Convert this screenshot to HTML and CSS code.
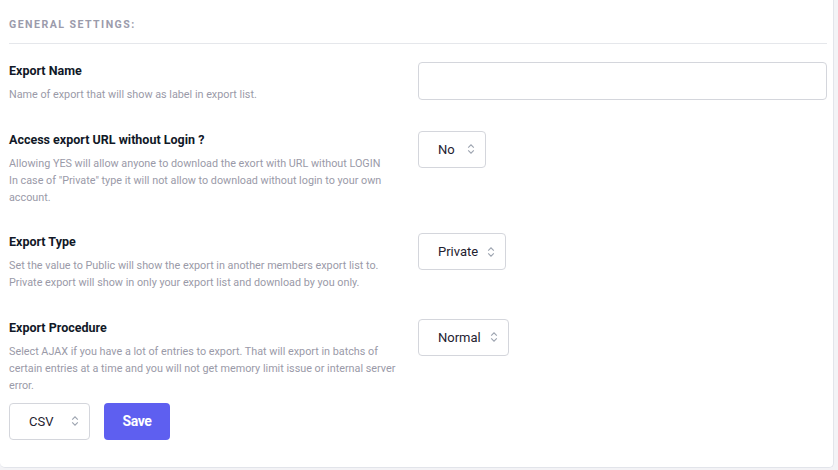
FILE: index.html
```html
<!DOCTYPE html>
<html lang="en">
<head>
<meta charset="utf-8">
<title>General Settings</title>
<link rel="stylesheet" href="styles.css">
</head>
<body>
<div class="card">
  <div class="section-title">General Settings:</div>
  <div class="rows">
    <div class="row">
      <div class="info">
        <div class="label">Export Name</div>
        <div class="desc">Name of export that will show as label in export list.</div>
      </div>
      <div class="control">
        <div class="text-input"></div>
      </div>
    </div>
    <div class="row">
      <div class="info">
        <div class="label">Access export URL without Login ?</div>
        <div class="desc">Allowing YES will allow anyone to download the exort with URL without LOGIN<br>In case of "Private" type it will not allow to download without login to your own account.</div>
      </div>
      <div class="control">
        <div class="select sel-no"><span>No</span><svg class="arrows" width="8" height="12" viewBox="0 0 8 12"><path d="M1.2 4.6 L4 1.8 L6.8 4.6 M1.2 7.4 L4 10.2 L6.8 7.4" fill="none" stroke="#9ca3af" stroke-width="1.1"/></svg></div>
      </div>
    </div>
    <div class="row">
      <div class="info">
        <div class="label">Export Type</div>
        <div class="desc">Set the value to Public will show the export in another members export list to.<br>Private export will show in only your export list and download by you only.</div>
      </div>
      <div class="control">
        <div class="select sel-private"><span>Private</span><svg class="arrows" width="8" height="12" viewBox="0 0 8 12"><path d="M1.2 4.6 L4 1.8 L6.8 4.6 M1.2 7.4 L4 10.2 L6.8 7.4" fill="none" stroke="#9ca3af" stroke-width="1.1"/></svg></div>
      </div>
    </div>
    <div class="row">
      <div class="info">
        <div class="label">Export Procedure</div>
        <div class="desc">Select AJAX if you have a lot of entries to export. That will export in batchs of certain entries at a time and you will not get memory limit issue or internal server error.</div>
      </div>
      <div class="control">
        <div class="select sel-normal"><span>Normal</span><svg class="arrows" width="8" height="12" viewBox="0 0 8 12"><path d="M1.2 4.6 L4 1.8 L6.8 4.6 M1.2 7.4 L4 10.2 L6.8 7.4" fill="none" stroke="#9ca3af" stroke-width="1.1"/></svg></div>
      </div>
    </div>
  </div>
  <div class="footer">
    <div class="select sel-csv"><span>CSV</span><svg class="arrows" width="8" height="12" viewBox="0 0 8 12"><path d="M1.2 4.6 L4 1.8 L6.8 4.6 M1.2 7.4 L4 10.2 L6.8 7.4" fill="none" stroke="#9ca3af" stroke-width="1.1"/></svg></div>
    <button class="btn-save">Save</button>
  </div>
</div>
</body>
</html>
```
FILE: styles.css
```css
* { box-sizing: border-box; }
html, body { margin: 0; padding: 0; }
body {
  background: #f3f3f6;
  font-family: Roboto, "Liberation Sans", Arial, sans-serif;
  width: 838px;
  height: 470px;
  overflow: hidden;
}
.card {
  width: 834px;
  height: 468px;
  background: #ffffff;
  border-right: 1px solid #e2e4ea;
  border-bottom: 1px solid #e2e4ea;
  border-radius: 0 0 5px 5px;
  padding: 18px 6px 0 9px;
}
.section-title {
  font-size: 10.6px;
  line-height: 14px;
  font-weight: 700;
  letter-spacing: 1.45px;
  text-transform: uppercase;
  color: #9b9bab;
  padding-bottom: 11px;
  border-bottom: 1px solid #e5e7eb;
}
.rows {
  display: flex;
  flex-direction: column;
  gap: 27.5px;
  margin-top: 18px;
}
.row {
  display: grid;
  grid-template-columns: 1fr 1fr;
  align-items: start;
}
.info { padding-right: 10px; }
.label {
  font-size: 12.5px;
  line-height: 18px;
  font-weight: 700;
  color: #111827;
  margin-bottom: 6px;
}
.desc {
  font-size: 10.8px;
  line-height: 17px;
  color: #9a9aa8;
}
.control { display: flex; }
.text-input {
  width: 100%;
  height: 38px;
  border: 1px solid #d4d6dc;
  border-radius: 4px;
  background: #fff;
}
.select {
  height: 37px;
  border: 1px solid #d4d6dc;
  border-radius: 4px;
  background: #fff;
  display: flex;
  align-items: center;
  justify-content: space-between;
  padding: 0 10px 0 19px;
  font-size: 13px;
  color: #1f2230;
}
.select .arrows { flex: none; }
.sel-no { width: 68px; }
.sel-private { width: 88px; }
.sel-normal { width: 91px; }
.sel-csv { width: 81px; }
.footer {
  display: flex;
  gap: 14px;
  margin-top: 9px;
}
.btn-save {
  width: 66px;
  height: 37px;
  border: none;
  border-radius: 4px;
  background: #5e5ff0;
  color: #ffffff;
  font-family: Roboto, "Liberation Sans", Arial, sans-serif;
  font-size: 14px;
  font-weight: 700;
  letter-spacing: -0.4px;
  padding: 0;
}
```
